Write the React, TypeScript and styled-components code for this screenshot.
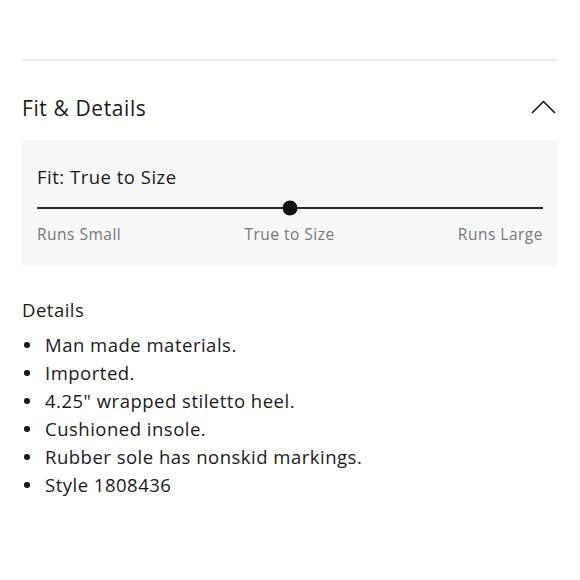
import React from "react";
import styled, { createGlobalStyle } from "styled-components";

const Global = createGlobalStyle`
  html, body { margin: 0; padding: 0; background: #fff; }
  body { font-family: "Open Sans", "Noto Sans", sans-serif; color: #1a1a1a; -webkit-font-smoothing: antialiased; }
`;

const Page = styled.div`
  width: 580px;
  height: 580px;
  box-sizing: border-box;
  padding: 59px 22px 0 22px;
  display: flex;
  flex-direction: column;
`;

const Divider = styled.div`
  height: 2px;
  background: #ececec;
`;

const Header = styled.div`
  display: flex;
  align-items: center;
  justify-content: space-between;
  height: 79px;
  box-sizing: border-box;
  padding-top: 15px;
`;

const Title = styled.h2`
  margin: 0;
  font-size: 21px;
  letter-spacing: 0.6px;
  font-weight: 400;
  color: #1a1a1a;
`;

const Chevron = styled.svg`
  width: 25px;
  height: 14px;
  margin-right: 2px;
  margin-top: -2px;
`;

const FitPanel = styled.section`
  background: #f7f7f7;
  padding: 24px 15px 20px 15px;
  display: flex;
  flex-direction: column;
  height: 126px;
  box-sizing: border-box;
`;

const FitTitle = styled.div`
  font-size: 18.5px;
  letter-spacing: 0.5px;
  color: #1a1a1a;
  line-height: 26px;
`;

const Track = styled.div`
  position: relative;
  height: 2px;
  background: #2a2a2a;
  margin-top: 17px;
`;

const Knob = styled.div`
  position: absolute;
  top: 50%;
  width: 15px;
  height: 15px;
  border-radius: 50%;
  background: #111;
  transform: translate(-50%, -50%);
`;

const Labels = styled.div`
  display: flex;
  justify-content: space-between;
  margin-top: 15px;
  font-size: 15.5px;
  letter-spacing: 0.5px;
  color: #777;
  line-height: 20px;
`;

const DetailsBlock = styled.section`
  margin-top: 31px;
  display: flex;
  flex-direction: column;
`;

const DetailsTitle = styled.div`
  font-size: 18.5px;
  letter-spacing: 0.5px;
  line-height: 26px;
  color: #1a1a1a;
`;

const List = styled.ul`
  list-style: none;
  margin: 8px 0 0 0;
  padding: 0;
`;

const Item = styled.li`
  display: flex;
  align-items: center;
  font-size: 18.5px;
  letter-spacing: 0.5px;
  line-height: 28px;
  color: #1a1a1a;
  &::before {
    content: "";
    width: 5.5px;
    height: 5.5px;
    border-radius: 50%;
    background: #1a1a1a;
    margin: 0 15.5px 0 2px;
    flex: none;
  }
`;

const items = [
  "Man made materials.",
  "Imported.",
  '4.25" wrapped stiletto heel.',
  "Cushioned insole.",
  "Rubber sole has nonskid markings.",
  "Style 1808436",
];

export default function App() {
  const pos = 50;
  return (
    <>
      <Global />
      <Page>
        <Divider />
        <Header>
          <Title>Fit &amp; Details</Title>
          <Chevron viewBox="0 0 25 14">
            <path d="M1 13 L12.5 1.5 L24 13" fill="none" stroke="#111" strokeWidth="1.5" />
          </Chevron>
        </Header>
        <FitPanel>
          <FitTitle>Fit: True to Size</FitTitle>
          <Track>
            <Knob style={{ left: `${pos}%` }} />
          </Track>
          <Labels>
            <span>Runs Small</span>
            <span>True to Size</span>
            <span>Runs Large</span>
          </Labels>
        </FitPanel>
        <DetailsBlock>
          <DetailsTitle>Details</DetailsTitle>
          <List>
            {items.map((t) => (
              <Item key={t}>{t}</Item>
            ))}
          </List>
        </DetailsBlock>
      </Page>
    </>
  );
}
